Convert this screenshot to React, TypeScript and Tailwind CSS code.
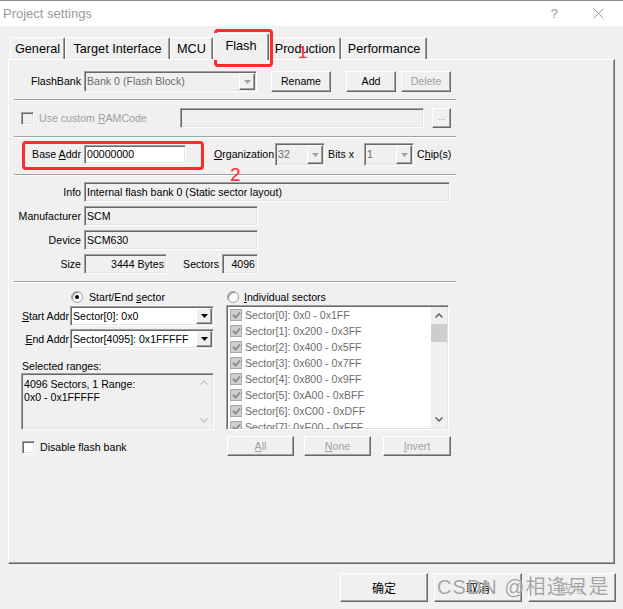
import type { ReactNode } from 'react';

const raised =
  'border border-t-white border-l-white border-r-[#696969] border-b-[#696969] shadow-[inset_-1px_-1px_0_#a0a0a0]';
const sunken =
  'border border-t-[#a0a0a0] border-l-[#a0a0a0] border-r-white border-b-white shadow-[inset_1px_1px_0_#696969,inset_-1px_-1px_0_#e3e3e3]';

function Etched() {
  return <div className="h-[2px] border-t border-t-[#a0a0a0] border-b border-b-white" />;
}

function Btn({ children, disabled, className = '' }: { children: ReactNode; disabled?: boolean; className?: string }) {
  return (
    <div
      className={`${raised} bg-[#f0f0f0] flex items-center justify-center shrink-0 ${
        disabled ? 'text-[#a0a0a0]' : 'text-black'
      } ${className}`}
    >
      {children}
    </div>
  );
}

function Combo({ value, disabled, className = '' }: { value: string; disabled?: boolean; className?: string }) {
  return (
    <div
      className={`${sunken} flex items-stretch shrink-0 ${
        disabled ? 'bg-[#f0f0f0] text-[#6d6d6d]' : 'bg-white text-black'
      } ${className}`}
    >
      <span className="flex-1 pl-[2px] flex items-center whitespace-nowrap overflow-hidden">{value}</span>
      <div className={`${raised} bg-[#f0f0f0] w-[16px] my-[1px] mr-[1px] flex items-center justify-center`}>
        <svg width="7" height="4" viewBox="0 0 7 4">
          <path d="M0 0H7L3.5 4Z" fill={disabled ? '#a0a0a0' : '#000'} />
        </svg>
      </div>
    </div>
  );
}

function Field({ children, className = '', white }: { children?: ReactNode; className?: string; white?: boolean }) {
  return (
    <div
      className={`${sunken} ${white ? 'bg-white' : 'bg-[#f0f0f0]'} flex items-center px-[2px] whitespace-nowrap shrink-0 ${className}`}
    >
      {children}
    </div>
  );
}

function Radio({ checked }: { checked?: boolean }) {
  return (
    <span className="w-[12px] h-[12px] rounded-full bg-white border border-[#a0a0a0] shadow-[inset_1px_1px_0_#8a8a8a] flex items-center justify-center shrink-0">
      {checked && <span className="w-[4px] h-[4px] rounded-full bg-black" />}
    </span>
  );
}

function Chevron({ up, color }: { up?: boolean; color: string }) {
  return (
    <svg width="8" height="5" viewBox="0 0 8 5">
      <path d={up ? 'M0.5 4.5L4 1L7.5 4.5' : 'M0.5 0.5L4 4L7.5 0.5'} stroke={color} strokeWidth="1.5" fill="none" />
    </svg>
  );
}

function Label({ children, className = '' }: { children: ReactNode; className?: string }) {
  return <span className={`text-right whitespace-nowrap shrink-0 ${className}`}>{children}</span>;
}

const sectors = [
  'Sector[0]: 0x0 - 0x1FF',
  'Sector[1]: 0x200 - 0x3FF',
  'Sector[2]: 0x400 - 0x5FF',
  'Sector[3]: 0x600 - 0x7FF',
  'Sector[4]: 0x800 - 0x9FF',
  'Sector[5]: 0xA00 - 0xBFF',
  'Sector[6]: 0xC00 - 0xDFF',
  'Sector[7]: 0xE00 - 0xFFF',
];

const tabs = [
  { label: 'General', w: 'w-[55px]' },
  { label: 'Target Interface', w: 'w-[105px]' },
  { label: 'MCU', w: 'w-[43px]' },
  { label: 'Flash', w: 'w-[56px]', active: true },
  { label: 'Production', w: 'w-[72px]' },
  { label: 'Performance', w: 'w-[86px]' },
];

export default function App() {
  return (
    <div className="relative w-[623px] h-[609px] bg-[#f0f0f0] text-[10.6px] leading-none text-black overflow-hidden flex flex-col border-t border-t-[#8c8c8c] font-['Liberation_Sans',Arial,sans-serif]">
      {/* title bar */}
      <div className="h-[25px] bg-white flex items-center pl-[3px] pr-[19px] shrink-0">
        <span className="text-[13px] text-[#9a9a9a] flex-1">Project settings</span>
        <span className="text-[13px] text-[#9a9a9a]">?</span>
        <svg className="ml-[35px]" width="11" height="11" viewBox="0 0 11 11">
          <path d="M0.5 0.5L10.5 10.5M10.5 0.5L0.5 10.5" stroke="#9a9a9a" strokeWidth="1" />
        </svg>
      </div>

      {/* tabs */}
      <div className="h-[33px] flex items-end pl-[10px] shrink-0">
        {tabs.map((t) => (
          <div
            key={t.label}
            className={`${t.w} flex items-center justify-center text-[12.7px] border-t border-l border-r border-t-white border-l-white border-r-[#696969] shadow-[inset_-1px_0_0_#a0a0a0] rounded-t-[2px] ${
              t.active ? 'h-[27px] -mb-px relative z-10 bg-[#f0f0f0] pb-[2px]' : 'h-[22px] pt-[2px]'
            }`}
          >
            {t.label}
          </div>
        ))}
      </div>

      {/* panel */}
      <div className={`ml-[8px] w-[607px] h-[505px] shrink-0 ${raised}`}>
        <div className="ml-[5px] w-[442px] flex flex-col">
          {/* flash bank */}
          <div className="mt-[11px] h-[21px] flex items-center">
            <Label className="w-[67px]">FlashBank</Label>
            <Combo value="Bank 0 (Flash Block)" disabled className="ml-[3px] w-[173px] h-[21px]" />
            <Btn className="ml-[14px] w-[60px] h-[21px]">Rename</Btn>
            <Btn className="ml-[15px] w-[50px] h-[21px]">Add</Btn>
            <Btn disabled className="ml-[5px] w-[50px] h-[21px]">
              Delete
            </Btn>
          </div>

          <div className="mt-[7px]">
            <Etched />
          </div>

          {/* ramcode */}
          <div className="mt-[7px] h-[20px] flex items-center">
            <div className="w-[166px] flex items-center shrink-0">
              <span className={`ml-[7px] w-[13px] h-[13px] bg-[#f0f0f0] ${sunken}`} />
              <span className="ml-[5px] text-[#a0a0a0]">
                Use custom <span className="underline">R</span>AMCode
              </span>
            </div>
            <Field className="w-[244px] h-[20px]" />
            <Btn disabled className="ml-[8px] w-[19px] h-[20px] text-[9px] pb-[2px]">
              ...
            </Btn>
          </div>

          <div className="mt-[8px]">
            <Etched />
          </div>

          {/* base addr */}
          <div className="mt-[5px] h-[23px] flex items-center">
            <Label className="w-[67px]">
              Base <span className="underline">A</span>ddr
            </Label>
            <Field white className="ml-[3px] w-[102px] h-[19px]">
              00000000
            </Field>
            <span className="ml-[28px] whitespace-nowrap">
              <span className="underline">O</span>rganization
            </span>
            <Combo value="32" disabled className="ml-[1px] w-[50px] h-[23px]" />
            <span className="ml-[3px] w-[36px] whitespace-nowrap shrink-0">Bits x</span>
            <Combo value="1" disabled className="w-[50px] h-[23px]" />
            <span className="ml-[3px] whitespace-nowrap">
              C<span className="underline">h</span>ip(s)
            </span>
          </div>

          <div className="mt-[8px]">
            <Etched />
          </div>

          {/* info */}
          <div className="mt-[6px] h-[20px] flex items-center">
            <Label className="w-[67px]">Info</Label>
            <Field className="ml-[3px] w-[366px] h-[20px]">Internal flash bank 0 (Static sector layout)</Field>
          </div>
          <div className="mt-[4px] h-[20px] flex items-center">
            <Label className="w-[67px]">Manufacturer</Label>
            <Field className="ml-[3px] w-[174px] h-[20px]">SCM</Field>
          </div>
          <div className="mt-[4px] h-[20px] flex items-center">
            <Label className="w-[67px]">Device</Label>
            <Field className="ml-[3px] w-[174px] h-[20px]">SCM630</Field>
          </div>
          <div className="mt-[4px] h-[20px] flex items-center">
            <Label className="w-[67px]">Size</Label>
            <Field className="ml-[3px] w-[83px] h-[20px] justify-end">3444 Bytes</Field>
            <Label className="ml-[16px] w-[36px]">Sectors</Label>
            <Field className="ml-[3px] w-[36px] h-[20px] justify-end">4096</Field>
          </div>

          <div className="mt-[7px]">
            <Etched />
          </div>

          {/* radios */}
          <div className="mt-[7px] h-[14px] flex items-center">
            <div className="w-[213px] flex items-center shrink-0">
              <span className="ml-[57px]">
                <Radio checked />
              </span>
              <span className="ml-[6px] whitespace-nowrap">
                Start/End <span className="underline">s</span>ector
              </span>
            </div>
            <Radio />
            <span className="ml-[5px] whitespace-nowrap">
              <span className="underline">I</span>ndividual sectors
            </span>
          </div>

          <div className="mt-[1px] flex">
            {/* left column */}
            <div className="w-[212px] pt-[1px] flex flex-col shrink-0">
              <div className="h-[20px] flex items-center">
                <Label className="w-[55px]">
                  <span className="underline">S</span>tart Addr
                </Label>
                <Combo value="Sector[0]: 0x0" className="ml-[1px] w-[144px] h-[20px]" />
              </div>
              <div className="mt-[3px] h-[20px] flex items-center">
                <Label className="w-[55px]">
                  <span className="underline">E</span>nd Addr
                </Label>
                <Combo value="Sector[4095]: 0x1FFFFF" className="ml-[1px] w-[144px] h-[20px]" />
              </div>
              <div className="mt-[11px] h-[13px] pl-[8px] flex items-center">Selected ranges:</div>
              <div className={`ml-[7px] w-[193px] h-[57px] bg-[#f0f0f0] flex ${sunken}`}>
                <div className="flex-1 pl-[2px] pt-[4px] leading-[13px]">
                  <div>4096 Sectors, 1 Range:</div>
                  <div>0x0 - 0x1FFFFF</div>
                </div>
                <div className="w-[16px] my-[1px] mr-[1px] flex flex-col justify-between items-center py-[5px]">
                  <Chevron up color="#c8c8c8" />
                  <Chevron color="#c8c8c8" />
                </div>
              </div>
              <div className="mt-[11px] h-[13px] flex items-center">
                <span className={`ml-[8px] w-[13px] h-[13px] bg-white ${sunken}`} />
                <span className="ml-[5px]">Disable flash bank</span>
              </div>
            </div>

            {/* right column */}
            <div className="flex flex-col">
              <div className={`w-[223px] h-[125px] bg-white flex overflow-hidden ${sunken}`}>
                <div className="flex-1 pt-[1px] overflow-hidden">
                  {sectors.map((s) => (
                    <div key={s} className="h-[16px] flex items-center text-[#6d6d6d] whitespace-nowrap">
                      <span className="ml-[3px] w-[12px] h-[12px] bg-[#cfcfcf] border border-[#a8a8a8] flex items-center justify-center">
                        <svg width="9" height="8" viewBox="0 0 9 8">
                          <path d="M1 4L3.5 6.5L8 1.5" stroke="#8a8a8a" strokeWidth="1.8" fill="none" />
                        </svg>
                      </span>
                      <span className="ml-[3px]">{s}</span>
                    </div>
                  ))}
                </div>
                <div className="w-[16px] my-[1px] mr-[1px] bg-[#f0f0f0] flex flex-col">
                  <div className="h-[17px] flex items-center justify-center">
                    <Chevron up color="#606060" />
                  </div>
                  <div className="h-[18px] bg-[#cdcdcd]" />
                  <div className="flex-1" />
                  <div className="h-[17px] flex items-center justify-center">
                    <Chevron color="#606060" />
                  </div>
                </div>
              </div>
              <div className="mt-[6px] h-[20px] flex">
                <Btn disabled className="ml-[1px] w-[67px] h-[20px]">
                  <span className="underline">A</span>ll
                </Btn>
                <Btn disabled className="ml-[10px] w-[67px] h-[20px]">
                  <span className="underline">N</span>one
                </Btn>
                <Btn disabled className="ml-[12px] w-[68px] h-[20px]">
                  <span className="underline">I</span>nvert
                </Btn>
              </div>
            </div>
          </div>
        </div>
      </div>

      {/* dialog buttons */}
      <div className="mt-[9px] flex justify-end gap-[6px] pr-[7px] text-[12px] font-['Noto_Sans_CJK_SC',sans-serif]">
        <Btn className="w-[88px] h-[29px]">确定</Btn>
        <Btn className="w-[88px] h-[29px]">取消</Btn>
        <Btn disabled className="w-[88px] h-[29px]">
          应用
        </Btn>
      </div>

      {/* annotations */}
      <div className="absolute left-[214px] top-[28px] w-[59px] h-[38px] border-[3px] border-[#ff2a2a] rounded-[4px] pointer-events-none" />
      <span className="absolute left-[298px] top-[43px] text-[17px] leading-none text-[#ff2a2a] font-['Liberation_Sans',sans-serif]">
        1
      </span>
      <div className="absolute left-[22px] top-[140px] w-[182px] h-[29px] border-[3px] border-[#ff2a2a] rounded-[4px] pointer-events-none" />
      <span className="absolute left-[230px] top-[164px] text-[19px] leading-none text-[#ff2a2a] font-['Liberation_Sans',sans-serif]">
        2
      </span>

      {/* watermark */}
      <span className="absolute left-[437px] top-[576px] text-[20px] leading-none tracking-[1px] text-[#8c8c8c]/80 whitespace-nowrap [text-shadow:0_0_1px_#fff] font-['Liberation_Sans','Noto_Sans_CJK_SC',sans-serif]">
        CSDN @相逢只是
      </span>
    </div>
  );
}
